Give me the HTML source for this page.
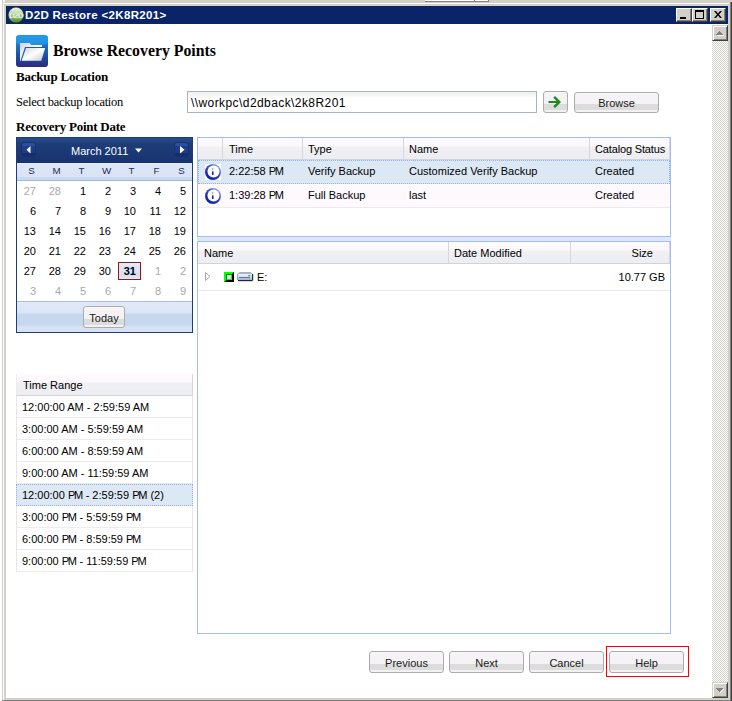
<!DOCTYPE html>
<html><head><meta charset="utf-8">
<style>
html,body{margin:0;padding:0;}
body{width:732px;height:701px;position:relative;overflow:hidden;background:#fff;font-family:"Liberation Sans",sans-serif;font-size:11px;color:#000;}
.a{position:absolute;}
.t{position:absolute;white-space:pre;line-height:13px;font-size:11px;}
.sf{font-family:"Liberation Serif",serif;}
.btn{position:absolute;box-sizing:border-box;border:1px solid #acacac;border-radius:3px;background:linear-gradient(#fbfafb 0,#f5f3f5 8%,#f4f2f4 60%,#dcdcdc 60%,#dcdcdc 89%,#f2f2f2 89%);}
.btn span{position:absolute;left:0;right:0;text-align:center;white-space:pre;line-height:13px;font-size:11px;color:#1a1a1a;}
.cap{position:absolute;top:8px;width:16px;height:14px;box-sizing:border-box;background:#d4d0c8;border-top:1px solid #fff;border-left:1px solid #fff;border-right:1px solid #404040;border-bottom:1px solid #404040;box-shadow:inset -1px -1px 0 #808080;}
</style></head>
<body>
<!-- window frame -->
<div class="a" style="left:0;top:0;width:732px;height:2px;background:#d4d0c8"></div>
<div class="a" style="left:0;top:0;width:2px;height:701px;background:#fff"></div>
<div class="a" style="left:3px;top:0;width:2px;height:2px;background:#fff"></div>
<div class="a" style="left:425px;top:0;width:49px;height:1px;background:#fff"></div>
<div class="a" style="left:425px;top:1px;width:50px;height:1px;background:#808080"></div>
<div class="a" style="left:474px;top:0;width:1px;height:2px;background:#808080"></div>
<div class="a" style="left:475px;top:0;width:13px;height:1px;background:#fff"></div>
<div class="a" style="left:475px;top:1px;width:14px;height:1px;background:#808080"></div>
<div class="a" style="left:488px;top:0;width:1px;height:2px;background:#808080"></div>
<div class="a" style="left:2px;top:2px;width:728px;height:698px;background:#d4d0c8"></div>
<div class="a" style="left:3px;top:3px;width:1px;height:697px;background:#fff"></div>
<div class="a" style="left:3px;top:3px;width:726px;height:1px;background:#fff"></div>
<div class="a" style="left:730px;top:2px;width:1px;height:699px;background:#808080"></div>
<div class="a" style="left:731px;top:2px;width:1px;height:699px;background:#404040"></div>
<div class="a" style="left:2px;top:700px;width:729px;height:1px;background:#808080"></div>
<div class="a" style="left:6px;top:24px;width:722px;height:674px;background:#fff"></div>
<!-- title bar -->
<div class="a" style="left:6px;top:6px;width:722px;height:18px;background:#0a246a"></div>
<svg id="appicon" class="a" style="left:8px;top:7px" width="16" height="16" viewBox="0 0 16 16"><defs><linearGradient id="ag" x1="0" y1="0" x2="0" y2="1"><stop offset="0" stop-color="#e6f2e0"/><stop offset="0.35" stop-color="#c4e0b4"/><stop offset="0.6" stop-color="#8cbc6c"/><stop offset="1" stop-color="#4e8a26"/></linearGradient></defs><circle cx="8" cy="8" r="8" fill="#3a3a20"/><circle cx="8" cy="8" r="7.5" fill="url(#ag)"/><text x="8" y="10.8" text-anchor="middle" font-family="Liberation Sans" font-weight="bold" font-size="8" letter-spacing="-0.7" fill="#fff" stroke="#b8ccb0" stroke-width="0.3">D2D</text></svg>
<div class="t" style="left:25px;top:9px;font-weight:bold;font-size:11.5px;letter-spacing:0.35px;color:#fff">D2D Restore &lt;2K8R201&gt;</div>
<div class="cap" style="left:676px"></div>
<div class="a" style="left:680px;top:17px;width:6px;height:2px;background:#000"></div>
<div class="cap" style="left:692px"></div>
<div class="a" style="left:695px;top:10px;width:9px;height:9px;box-sizing:border-box;border:1px solid #000;border-top-width:2px"></div>
<div class="cap" style="left:710px"></div>
<svg class="a" style="left:714px;top:11px" width="8" height="7" viewBox="0 0 8 7"><path d="M0 0h2l2 2.5 2-2.5h2l-3 3.5 3 3.5h-2l-2-2.5-2 2.5h-2l3-3.5z" fill="#000"/></svg>
<!-- scrollbar -->
<div class="a" style="left:712px;top:41px;width:16px;height:641px;background-image:conic-gradient(#d4d0c8 25%,#fff 0 50%,#d4d0c8 0 75%,#fff 0);background-size:2px 2px"></div>
<div class="a" style="left:712px;top:25px;width:16px;height:16px;box-sizing:border-box;background:#d4d0c8;border-top:1px solid #d4d0c8;border-left:1px solid #d4d0c8;border-right:1px solid #404040;border-bottom:1px solid #404040;box-shadow:inset 1px 1px 0 #fff,inset -1px -1px 0 #808080"></div>
<svg class="a" style="left:716px;top:31px" width="8" height="5"><path d="M3 0h1v1h1v1h1v1h1v1h-7v-1h1v-1h1v-1h1z" fill="#808080"/><path d="M1 4h7v1h-7z" fill="#fff"/></svg>
<div class="a" style="left:712px;top:682px;width:16px;height:16px;box-sizing:border-box;background:#d4d0c8;border-top:1px solid #d4d0c8;border-left:1px solid #d4d0c8;border-right:1px solid #404040;border-bottom:1px solid #404040;box-shadow:inset 1px 1px 0 #fff,inset -1px -1px 0 #808080"></div>
<svg class="a" style="left:716px;top:688px" width="9" height="5"><path d="M0 0h7v1h-1v1h-1v1h-1v1h-1v-1h-1v-1h-1v-1h-1z" fill="#808080"/><path d="M7 1h1v1h-1v1h-1v1h-1v1h-1v-1h1v-1h1v-1h1z" fill="#fff"/></svg>

<!-- CONTENT -->
<svg class="a" style="left:16px;top:35px" width="32" height="32" viewBox="0 0 32 32">
<defs>
<linearGradient id="ib" x1="0" y1="0" x2="0" y2="1"><stop offset="0" stop-color="#1e96e4"/><stop offset="0.3" stop-color="#1b78cc"/><stop offset="0.65" stop-color="#1d4fa6"/><stop offset="1" stop-color="#2b2a7e"/></linearGradient>
<linearGradient id="fw" x1="0" y1="0" x2="1" y2="1"><stop offset="0" stop-color="#d0d0da"/><stop offset="0.5" stop-color="#ffffff"/><stop offset="1" stop-color="#c4c4ce"/></linearGradient>
</defs>
<rect x="0" y="0" width="32" height="32" rx="3" fill="url(#ib)"/>
<path d="M2 1h28q2 0 2 2v5q-16 8 -32 0v-5q0-2 2-2z" fill="#28a4ee" opacity="0.55"/>
<path d="M4 8h9.5l1.6 2h10.9v2.6H9.5L5 25.7H4z" fill="url(#fw)"/>
<path d="M9 12h21.2l-4.6 14H4.4z" fill="#1a5cb4"/>
<path d="M10 13h19.2l-4 12.7H5.6z" fill="url(#fw)"/>
</svg>
<div class="t sf" style="left:53px;top:42px;font-size:15.8px;line-height:18px;font-weight:bold">Browse Recovery Points</div>
<div class="t sf" style="left:16px;top:69px;font-size:13px;letter-spacing:-0.2px;line-height:15px;font-weight:bold">Backup Location</div>
<div class="t sf" style="left:16px;top:95px;font-size:12.5px;letter-spacing:-0.28px;line-height:14px">Select backup location</div>
<div class="t sf" style="left:16px;top:119px;font-size:13px;letter-spacing:-0.25px;line-height:15px;font-weight:bold">Recovery Point Date</div>
<div class="a" style="left:187px;top:91px;width:350px;height:22px;box-sizing:border-box;border:1px solid #a9b2cc;background:linear-gradient(#efeff1 0,#f7f7f8 4px,#fff 6px,#fff)"></div>
<div class="t" style="left:191px;top:96px;font-size:12px;letter-spacing:0.42px;line-height:15px">\\workpc\d2dback\2k8R201</div>
<div class="btn" style="left:543px;top:91px;width:25px;height:22px"></div>
<svg class="a" style="left:548px;top:96px" width="13" height="12" viewBox="0 0 13 12"><path d="M0.5 5h8l-3.2-3.3 1.7-1.7 6 6-6 6-1.7-1.7 3.2-3.3h-8z" fill="#1c8c1c"/></svg>
<div class="btn" style="left:574px;top:92px;width:85px;height:21px"><span style="top:4px">Browse</span></div>
<!-- /HEADER -->
<div class="a" style="left:16px;top:137px;width:177px;height:196px;box-sizing:border-box;border:1px solid #1b3b7b;background:#fff"></div>
<div class="a" style="left:17px;top:138px;width:175px;height:25px;background:linear-gradient(#284c8c 0,#22447f 4px,#1d3c78 6px,#183470 24px,#12306a 25px)"></div>
<div class="a" style="left:21px;top:142px;width:15px;height:15px;box-sizing:border-box;border:1px solid #18306e;border-radius:3px;background:linear-gradient(#2a50a0 0,#2a50a0 3px,#1f3c86 3px,#1f3c86 10px,#172c6a 10px,#172c6a 13px)"></div>
<div class="a" style="left:174px;top:142px;width:15px;height:15px;box-sizing:border-box;border:1px solid #18306e;border-radius:3px;background:linear-gradient(#2a50a0 0,#2a50a0 3px,#1f3c86 3px,#1f3c86 10px,#172c6a 10px,#172c6a 13px)"></div>
<svg class="a" style="left:26px;top:146px" width="5" height="8"><path d="M4.5 0v7.5l-4-3.75z" fill="#fff"/></svg>
<svg class="a" style="left:180px;top:146px" width="5" height="8"><path d="M0 0v7.5l4.5-3.75z" fill="#fff"/></svg>
<div class="t" style="left:71px;top:145px;color:#fff">March 2011</div>
<svg class="a" style="left:135px;top:148px" width="7" height="5"><path d="M0 0.5h7l-3.5 4z" fill="#fff"/></svg>
<div class="a" style="left:17px;top:163px;width:175px;height:18px;background:linear-gradient(#e6eefa 0,#dde6f6 2px,#d9e3f5 14px,#c8daf0 14px,#c8daf0 17px,#9fb9e2 17px)"></div>
<div class="t" style="left:21.5px;top:164px;width:20px;text-align:center;font-size:9.8px;color:#1f2f55">S</div>
<div class="t" style="left:46.5px;top:164px;width:20px;text-align:center;font-size:9.8px;color:#1f2f55">M</div>
<div class="t" style="left:71.5px;top:164px;width:20px;text-align:center;font-size:9.8px;color:#1f2f55">T</div>
<div class="t" style="left:96.5px;top:164px;width:20px;text-align:center;font-size:9.8px;color:#1f2f55">W</div>
<div class="t" style="left:121.5px;top:164px;width:20px;text-align:center;font-size:9.8px;color:#1f2f55">T</div>
<div class="t" style="left:146.5px;top:164px;width:20px;text-align:center;font-size:9.8px;color:#1f2f55">F</div>
<div class="t" style="left:171.5px;top:164px;width:20px;text-align:center;font-size:9.8px;color:#1f2f55">S</div>
<div class="a" style="left:118px;top:262px;width:23px;height:18px;box-sizing:border-box;border:1px solid #9b1313;background:linear-gradient(#e4f2fc 0,#dce6f6 3px,#d6e0f4 13px,#e2ecfa 16px)"></div>
<div class="t" style="left:12px;top:184.5px;width:24px;text-align:right;color:#a8a8a8">27</div>
<div class="t" style="left:37px;top:184.5px;width:24px;text-align:right;color:#a8a8a8">28</div>
<div class="t" style="left:62px;top:184.5px;width:24px;text-align:right;color:#000">1</div>
<div class="t" style="left:87px;top:184.5px;width:24px;text-align:right;color:#000">2</div>
<div class="t" style="left:112px;top:184.5px;width:24px;text-align:right;color:#000">3</div>
<div class="t" style="left:137px;top:184.5px;width:24px;text-align:right;color:#000">4</div>
<div class="t" style="left:162px;top:184.5px;width:24px;text-align:right;color:#000">5</div>
<div class="t" style="left:12px;top:204.5px;width:24px;text-align:right;color:#000">6</div>
<div class="t" style="left:37px;top:204.5px;width:24px;text-align:right;color:#000">7</div>
<div class="t" style="left:62px;top:204.5px;width:24px;text-align:right;color:#000">8</div>
<div class="t" style="left:87px;top:204.5px;width:24px;text-align:right;color:#000">9</div>
<div class="t" style="left:112px;top:204.5px;width:24px;text-align:right;color:#000">10</div>
<div class="t" style="left:137px;top:204.5px;width:24px;text-align:right;color:#000">11</div>
<div class="t" style="left:162px;top:204.5px;width:24px;text-align:right;color:#000">12</div>
<div class="t" style="left:12px;top:224.5px;width:24px;text-align:right;color:#000">13</div>
<div class="t" style="left:37px;top:224.5px;width:24px;text-align:right;color:#000">14</div>
<div class="t" style="left:62px;top:224.5px;width:24px;text-align:right;color:#000">15</div>
<div class="t" style="left:87px;top:224.5px;width:24px;text-align:right;color:#000">16</div>
<div class="t" style="left:112px;top:224.5px;width:24px;text-align:right;color:#000">17</div>
<div class="t" style="left:137px;top:224.5px;width:24px;text-align:right;color:#000">18</div>
<div class="t" style="left:162px;top:224.5px;width:24px;text-align:right;color:#000">19</div>
<div class="t" style="left:12px;top:244.5px;width:24px;text-align:right;color:#000">20</div>
<div class="t" style="left:37px;top:244.5px;width:24px;text-align:right;color:#000">21</div>
<div class="t" style="left:62px;top:244.5px;width:24px;text-align:right;color:#000">22</div>
<div class="t" style="left:87px;top:244.5px;width:24px;text-align:right;color:#000">23</div>
<div class="t" style="left:112px;top:244.5px;width:24px;text-align:right;color:#000">24</div>
<div class="t" style="left:137px;top:244.5px;width:24px;text-align:right;color:#000">25</div>
<div class="t" style="left:162px;top:244.5px;width:24px;text-align:right;color:#000">26</div>
<div class="t" style="left:12px;top:264.5px;width:24px;text-align:right;color:#000">27</div>
<div class="t" style="left:37px;top:264.5px;width:24px;text-align:right;color:#000">28</div>
<div class="t" style="left:62px;top:264.5px;width:24px;text-align:right;color:#000">29</div>
<div class="t" style="left:87px;top:264.5px;width:24px;text-align:right;color:#000">30</div>
<div class="t" style="left:112px;top:264.5px;width:24px;text-align:right;color:#000;font-weight:bold">31</div>
<div class="t" style="left:137px;top:264.5px;width:24px;text-align:right;color:#a8a8a8">1</div>
<div class="t" style="left:162px;top:264.5px;width:24px;text-align:right;color:#a8a8a8">2</div>
<div class="t" style="left:12px;top:284.5px;width:24px;text-align:right;color:#a8a8a8">3</div>
<div class="t" style="left:37px;top:284.5px;width:24px;text-align:right;color:#a8a8a8">4</div>
<div class="t" style="left:62px;top:284.5px;width:24px;text-align:right;color:#a8a8a8">5</div>
<div class="t" style="left:87px;top:284.5px;width:24px;text-align:right;color:#a8a8a8">6</div>
<div class="t" style="left:112px;top:284.5px;width:24px;text-align:right;color:#a8a8a8">7</div>
<div class="t" style="left:137px;top:284.5px;width:24px;text-align:right;color:#a8a8a8">8</div>
<div class="t" style="left:162px;top:284.5px;width:24px;text-align:right;color:#a8a8a8">9</div>
<div class="a" style="left:17px;top:301px;width:175px;height:31px;background:linear-gradient(#a5bfe6 0,#a5bfe6 1px,#e2eaf8 1px,#dae4f6 12px,#c6d8ee 13px,#c6d8ee 24px,#d8e2f4 26px,#d8e2f4 31px)"></div>
<div class="btn" style="left:83px;top:306px;width:42px;height:22px"><span style="top:5px">Today</span></div>
<div class="a" style="left:16px;top:374px;width:177px;height:198px;box-sizing:border-box;border:1px solid #e6e6e6;border-top:none;background:#fff"></div>
<div class="a" style="left:16px;top:374px;width:177px;height:22px;box-sizing:border-box;border-left:1px solid #ececec;border-right:1px solid #d6d6d6;border-bottom:1px solid #d2d2d6;background:linear-gradient(#fefafe 0,#fcf8fc 8px,#f0eff3 9px,#eceef4 21px)"></div>
<div class="t" style="left:23px;top:379px">Time Range</div>
<div class="a" style="left:17px;top:417px;width:175px;height:1px;background:#ececec"></div>
<div class="t" style="left:22px;top:400.5px">12:00:00 AM - 2:59:59 AM</div>
<div class="a" style="left:17px;top:439px;width:175px;height:1px;background:#ececec"></div>
<div class="t" style="left:22px;top:422.5px">3:00:00 AM - 5:59:59 AM</div>
<div class="a" style="left:17px;top:461px;width:175px;height:1px;background:#ececec"></div>
<div class="t" style="left:22px;top:444.5px">6:00:00 AM - 8:59:59 AM</div>
<div class="a" style="left:17px;top:483px;width:175px;height:1px;background:#ececec"></div>
<div class="t" style="left:22px;top:466.5px">9:00:00 AM - 11:59:59 AM</div>
<div class="a" style="left:16px;top:484px;width:177px;height:22px;box-sizing:border-box;border:1px dotted #8eb0e2;background:#dde8f5"></div>
<div class="t" style="left:22px;top:488.5px">12:00:00 <span style="letter-spacing:-1.3px">P</span><span style="letter-spacing:-0.5px">M</span> - 2:59:59 <span style="letter-spacing:-1.3px">P</span>M (2)</div>
<div class="a" style="left:17px;top:527px;width:175px;height:1px;background:#ececec"></div>
<div class="t" style="left:22px;top:510.5px">3:00:00 <span style="letter-spacing:-1.3px">P</span><span style="letter-spacing:-0.5px">M</span> - 5:59:59 <span style="letter-spacing:-1.3px">P</span><span style="letter-spacing:-0.5px">M</span></div>
<div class="a" style="left:17px;top:549px;width:175px;height:1px;background:#ececec"></div>
<div class="t" style="left:22px;top:532.5px">6:00:00 <span style="letter-spacing:-1.3px">P</span><span style="letter-spacing:-0.5px">M</span> - 8:59:59 <span style="letter-spacing:-1.3px">P</span><span style="letter-spacing:-0.5px">M</span></div>
<div class="a" style="left:17px;top:571px;width:175px;height:1px;background:#ececec"></div>
<div class="t" style="left:22px;top:554.5px">9:00:00 <span style="letter-spacing:-1.3px">P</span><span style="letter-spacing:-0.5px">M</span> - 11:59:59 <span style="letter-spacing:-1.3px">P</span><span style="letter-spacing:-0.5px">M</span></div>
<!-- /LEFT -->
<div class="a" style="left:197px;top:137px;width:474px;height:100px;box-sizing:border-box;border:1px solid #a3bef0;background:#fff"></div>
<div class="a" style="left:198px;top:138px;width:472px;height:22px;box-sizing:border-box;border-bottom:1px solid #d4d2d8;background:linear-gradient(#fdfafd 0,#fbf8fb 8px,#f1f0f3 9px,#eceef3 21px)"></div>
<div class="a" style="left:222px;top:138px;width:1px;height:21px;background:#d8d8dc"></div>
<div class="a" style="left:302px;top:138px;width:1px;height:21px;background:#d8d8dc"></div>
<div class="a" style="left:403px;top:138px;width:1px;height:21px;background:#d8d8dc"></div>
<div class="a" style="left:589px;top:138px;width:1px;height:21px;background:#d8d8dc"></div>
<div class="a" style="left:669px;top:138px;width:1px;height:21px;background:#d8d8dc"></div>
<div class="t" style="left:229px;top:143px">Time</div>
<div class="t" style="left:308px;top:143px">Type</div>
<div class="t" style="left:409px;top:143px">Name</div>
<div class="t" style="left:595px;top:143px;letter-spacing:-0.15px">Catalog Status</div>
<div class="a" style="left:198px;top:160px;width:472px;height:24px;box-sizing:border-box;border:1px dotted #8eb0e2;background:#dde8f5"></div>
<div class="a" style="left:198px;top:184px;width:472px;height:23px;background:#fdf9fd"></div>
<div class="a" style="left:198px;top:207px;width:472px;height:1px;background:#ebebeb"></div>
<svg class="a" style="left:205px;top:164px" width="16" height="16" viewBox="0 0 16 16"><rect x="0" y="0" width="16" height="16" fill="#fff"/><defs><linearGradient id="ir164" x1="0.85" y1="0.05" x2="0.2" y2="0.95"><stop offset="0" stop-color="#9ab0ec"/><stop offset="0.45" stop-color="#3848c0"/><stop offset="1" stop-color="#0c1aa0"/></linearGradient></defs><circle cx="8" cy="8" r="8" fill="url(#ir164)"/><circle cx="8.5" cy="7.5" r="6" fill="#fdfdff"/><rect x="6.9" y="7.4" width="1.7" height="3.6" fill="#1e34b4"/><rect x="7" y="3.8" width="1.4" height="2.4" fill="#a8b6ea"/></svg>
<svg class="a" style="left:205px;top:188px" width="16" height="16" viewBox="0 0 16 16"><defs><linearGradient id="ir188" x1="0.85" y1="0.05" x2="0.2" y2="0.95"><stop offset="0" stop-color="#9ab0ec"/><stop offset="0.45" stop-color="#3848c0"/><stop offset="1" stop-color="#0c1aa0"/></linearGradient></defs><circle cx="8" cy="8" r="8" fill="url(#ir188)"/><circle cx="8.5" cy="7.5" r="6" fill="#fdfdff"/><rect x="6.9" y="7.4" width="1.7" height="3.6" fill="#1e34b4"/><rect x="7" y="3.8" width="1.4" height="2.4" fill="#a8b6ea"/></svg>
<div class="t" style="left:229px;top:164.5px">2:22:58 <span style="letter-spacing:-1.3px">P</span><span style="letter-spacing:-0.5px">M</span></div>
<div class="t" style="left:308px;top:164.5px">Verify Backup</div>
<div class="t" style="left:409px;top:164.5px">Customized Verify Backup</div>
<div class="t" style="left:595px;top:164.5px">Created</div>
<div class="t" style="left:229px;top:188.5px">1:39:28 <span style="letter-spacing:-1.3px">P</span><span style="letter-spacing:-0.5px">M</span></div>
<div class="t" style="left:308px;top:188.5px">Full Backup</div>
<div class="t" style="left:409px;top:188.5px">last</div>
<div class="t" style="left:595px;top:188.5px">Created</div>
<div class="a" style="left:197px;top:237px;width:474px;height:4px;background:#dde7f5"></div>
<div class="a" style="left:197px;top:241px;width:474px;height:393px;box-sizing:border-box;border:1px solid #a3bef0;background:#fff"></div>
<div class="a" style="left:198px;top:242px;width:472px;height:22px;box-sizing:border-box;border-bottom:1px solid #d4d2d8;background:linear-gradient(#fdfafd 0,#fbf8fb 8px,#f1f0f3 9px,#eceef3 21px)"></div>
<div class="a" style="left:448px;top:242px;width:1px;height:21px;background:#d8d8dc"></div>
<div class="a" style="left:570px;top:242px;width:1px;height:21px;background:#d8d8dc"></div>
<div class="a" style="left:669px;top:242px;width:1px;height:21px;background:#d8d8dc"></div>
<div class="t" style="left:204px;top:247px">Name</div>
<div class="t" style="left:454px;top:247px">Date Modified</div>
<div class="t" style="left:600px;top:247px;width:53px;text-align:right">Size</div>
<div class="a" style="left:198px;top:290px;width:472px;height:1px;background:#ececec"></div>
<svg class="a" style="left:205px;top:272px" width="6" height="9"><path d="M0.5 0.5v8l4.5-4z" fill="#fff" stroke="#a6a6a6" stroke-width="1"/></svg>
<svg class="a" style="left:224px;top:272px" width="10" height="10"><rect x="0" y="0" width="10" height="10" fill="#00ff00"/><path d="M10 0v10h-9.5l2-2h5.5v-6z" fill="#000"/><rect x="2" y="2" width="6" height="1" fill="#009000"/><rect x="2" y="2" width="1" height="6" fill="#009000"/><rect x="3" y="3" width="4" height="4" fill="#fff"/></svg>
<svg class="a" style="left:237px;top:271px" width="17" height="11" viewBox="0 0 17 11"><defs><linearGradient id="dg" x1="0" y1="0" x2="0" y2="1"><stop offset="0" stop-color="#f2f4fa"/><stop offset="0.5" stop-color="#d0d8e6"/><stop offset="1" stop-color="#a4b0c8"/></linearGradient></defs><path d="M2.5 1h11l2 2h-15z" fill="#a8b2c8"/><rect x="0.3" y="3" width="15" height="6" fill="url(#dg)"/><rect x="0" y="3" width="1" height="6" fill="#9aa6be"/><rect x="15" y="3" width="1.2" height="6.5" fill="#26304c"/><rect x="1" y="9" width="14.5" height="1.2" fill="#1c2846"/><rect x="2" y="6" width="11" height="1.1" fill="#6878a6"/><rect x="11" y="4" width="2.4" height="1.3" rx="0.6" fill="#18d018"/></svg>
<div class="t" style="left:257px;top:270.5px">E:</div>
<div class="t" style="left:600px;top:270.5px;width:65px;text-align:right">10.77 GB</div>
<div class="btn" style="left:369px;top:651px;width:75px;height:22px"><span style="top:5px">Previous</span></div>
<div class="btn" style="left:449px;top:651px;width:75px;height:22px"><span style="top:5px">Next</span></div>
<div class="btn" style="left:529px;top:651px;width:75px;height:22px"><span style="top:5px">Cancel</span></div>
<div class="btn" style="left:609px;top:651px;width:75px;height:22px"><span style="top:5px">Help</span></div>
<div class="a" style="left:606px;top:646px;width:83px;height:31px;box-sizing:border-box;border:1px solid #ff0000"></div>
<!-- /RIGHT -->
</body></html>
